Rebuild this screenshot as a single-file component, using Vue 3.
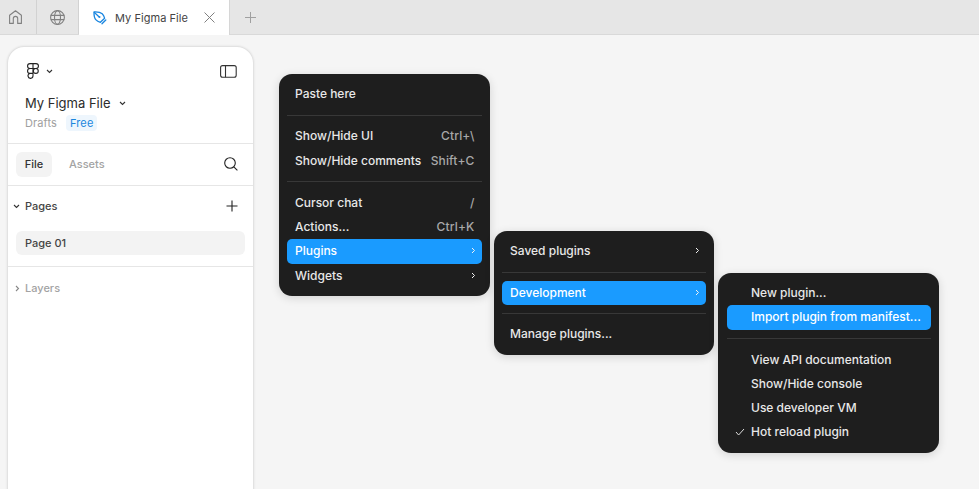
<script setup>
const menu1 = [
  { label: 'Paste here' },
  { sep: true },
  { label: 'Show/Hide UI', hint: 'Ctrl+\\' },
  { label: 'Show/Hide comments', hint: 'Shift+C' },
  { sep: true },
  { label: 'Cursor chat', hint: '/' },
  { label: 'Actions...', hint: 'Ctrl+K' },
  { label: 'Plugins', arrow: true, active: true },
  { label: 'Widgets', arrow: true },
]
const menu2 = [
  { label: 'Saved plugins', arrow: true },
  { sep: true },
  { label: 'Development', arrow: true, active: true },
  { sep: true },
  { label: 'Manage plugins...' },
]
const menu3 = [
  { label: 'New plugin...' },
  { label: 'Import plugin from manifest...', active: true },
  { sep: true },
  { label: 'View API documentation' },
  { label: 'Show/Hide console' },
  { label: 'Use developer VM' },
  { label: 'Hot reload plugin', check: true },
]
const menus = [
  { cls: 'm1', items: menu1 },
  { cls: 'm2', items: menu2 },
  { cls: 'm3', items: menu3 },
]
</script>

<template>
  <div class="app">
    <header class="tabbar">
      <div class="tab icon-tab home">
        <svg width="13" height="14" viewBox="0 0 13 14" fill="none" stroke="#808080" stroke-width="1.1"><path d="M.6 13.4V5.2L6.5.7l5.9 4.5v8.2H8.7V8.6a2.2 2.2 0 0 0-4.4 0v4.8z" stroke-linejoin="round"/></svg>
      </div>
      <div class="tab icon-tab globe">
        <svg width="15" height="15" viewBox="0 0 15 15" fill="none" stroke="#808080" stroke-width="1.1"><circle cx="7.5" cy="7.5" r="6.9"/><ellipse cx="7.5" cy="7.5" rx="3" ry="6.9"/><path d="M.8 5.4h13.4M.8 9.6h13.4"/></svg>
      </div>
      <div class="tab active-tab">
        <svg class="draft" width="14" height="14" viewBox="0 0 14 14" fill="none" stroke="#1a86e0" stroke-width="1.3"><path d="M1 1c3.600-.2 6.600.4 8.200 1.800 1.100 1 1.900 2.600 2.400 4.400L7.400 11.300C5.700 10.800 4 10 3 8.900 1.500 7.300.9 4.500 1 1z" stroke-linejoin="round"/><circle cx="6.400" cy="6" r="1.100" fill="#1a86e0" stroke="none"/><path d="M1.400 1.400 5.700 5.400M9 12.800l3.800-3.800" stroke-linecap="round"/></svg>
        <span class="tab-title">My Figma File</span>
        <svg class="close" width="11" height="11" viewBox="0 0 11 11" fill="none" stroke="#808080" stroke-width="1"><path d="M.5.5l10 10M10.500.5l-10 10"/></svg>
      </div>
      <div class="add-tab">
        <svg width="11" height="11" viewBox="0 0 11 11" fill="none" stroke="#a0a0a0" stroke-width="1"><path d="M5.500 0v11M0 5.500h11"/></svg>
      </div>
    </header>

    <main class="canvas">
      <aside class="panel">
        <section class="head">
          <div class="head-top">
            <div class="logo-wrap">
              <svg width="12" height="16" viewBox="0 0 12 16" fill="none" stroke="#222" stroke-width="1.1"><path d="M6 .6H3A2.450 2.450 0 0 0 3 5.500h3zM6 5.500H3a2.450 2.450 0 0 0 0 4.900h3zM6 10.400H3a2.500 2.500 0 1 0 3 2.450zM6 .6h3a2.450 2.450 0 0 1 0 4.900H6z"/><circle cx="8.800" cy="7.950" r="2.450"/></svg>
              <svg class="chev" width="7" height="5" viewBox="0 0 7 5" fill="none" stroke="#333" stroke-width="1.1"><path d="m1 1 2.500 2.500L6 1"/></svg>
            </div>
            <svg class="layout-icon" width="17" height="13" viewBox="0 0 17 13" fill="none" stroke="#333" stroke-width="1.1"><rect x=".6" y=".6" width="15.600" height="11.600" rx="2"/><path d="M5.500.6v11.600"/></svg>
          </div>
          <div class="file-name">
            <span>My Figma File</span>
            <svg class="chev" width="7" height="5" viewBox="0 0 7 5" fill="none" stroke="#333" stroke-width="1.1"><path d="m1 1 2.500 2.500L6 1"/></svg>
          </div>
          <div class="file-meta">
            <span class="drafts">Drafts</span>
            <span class="badge">Free</span>
          </div>
        </section>

        <section class="tabs">
          <span class="pill">File</span>
          <span class="assets">Assets</span>
          <svg class="search" width="14" height="14" viewBox="0 0 14 14" fill="none" stroke="#222" stroke-width="1.1"><circle cx="6" cy="6" r="5.300"/><path d="m9.800 9.800 3.600 3.600"/></svg>
        </section>

        <section class="pages">
          <div class="pages-head">
            <svg class="caret" width="7" height="5" viewBox="0 0 7 5" fill="none" stroke="#333" stroke-width="1.1"><path d="m1 1 2.500 2.500L6 1"/></svg>
            <span class="pages-label">Pages</span>
            <svg class="plus" width="12" height="12" viewBox="0 0 12 12" fill="none" stroke="#222" stroke-width="1.1"><path d="M6 .5v11M.5 6h11"/></svg>
          </div>
          <div class="page-row">Page 01</div>
        </section>

        <section class="layers">
          <svg class="caret" width="5" height="7" viewBox="0 0 5 7" fill="none" stroke="#888" stroke-width="1.1"><path d="m1 1 2.500 2.500L1 6"/></svg>
          <span>Layers</span>
        </section>
      </aside>

      <div v-for="m in menus" :key="m.cls" class="menu" :class="m.cls">
        <template v-for="(it, i) in m.items" :key="i">
          <div v-if="it.sep" class="sep"></div>
          <div v-else class="item" :class="{ active: it.active }">
            <svg v-if="it.check" class="check" width="10" height="8" viewBox="0 0 10 8" fill="none" stroke="#ddd" stroke-width="1"><path d="m1 4 2.600 3L9 1"/></svg>
            <span class="label">{{ it.label }}</span>
            <span v-if="it.hint" class="hint">{{ it.hint }}</span>
            <svg v-if="it.arrow" class="arrow" width="5" height="7" viewBox="0 0 5 7" fill="none" stroke="#f2f2f2" stroke-width="1"><path d="m1 1 2.500 2.500L1 6"/></svg>
          </div>
        </template>
      </div>
    </main>
  </div>
</template>

<style>
html, body { margin: 0; background: #f5f5f5; overflow: hidden; }
</style>

<style scoped>
.app {
  width: 979px;
  height: 489px;
  display: flex;
  flex-direction: column;
  overflow: hidden;
  font-family: Inter, "Noto Sans", sans-serif;
  font-size: 12px;
  color: #333;
  background: #f5f5f5;
}
.tabbar {
  height: 34px;
  flex: none;
  display: flex;
  background: #e6e6e6;
  border-bottom: 1px solid #d9d9d9;
}
.tab {
  display: flex;
  align-items: center;
  box-sizing: border-box;
}
.icon-tab {
  justify-content: center;
  border-right: 1px solid #d2d2d2;
}
.home { width: 37px; padding-right: 6px; }
.globe { width: 42px; }
.active-tab {
  width: 151px;
  height: 35px;
  background: #fff;
  padding-left: 14px;
  border-right: 1px solid #d6d6d6;
}
.tab-title {
  margin-left: 8px;
  font-size: 11px;
  color: #444;
  letter-spacing: 0.05px;
}
.close { margin-left: 16px; }
.add-tab {
  width: 40px;
  display: flex;
  align-items: center;
  justify-content: center;
}
.canvas {
  flex: 1;
  position: relative;
  padding: 12px 0 0 8px;
  min-height: 0;
}
.panel {
  width: 245px;
  height: 460px;
  background: #fff;
  border-radius: 16px 16px 0 0;
  box-shadow: 0 0 3px rgba(0, 0, 0, 0.22);
  display: flex;
  flex-direction: column;
}
.head {
  height: 97px;
  flex: none;
  box-sizing: border-box;
  padding: 15px 16px 0 19px;
  border-bottom: 1px solid #e6e6e6;
}
.head-top {
  display: flex;
  align-items: center;
  justify-content: space-between;
  height: 17px;
}
.logo-wrap {
  display: flex;
  align-items: center;
  gap: 7px;
}
.logo-wrap .chev { margin-top: 2px; }
.layout-icon { margin-top: 2px; }
.file-name {
  margin: 15px 0 0 -2px;
  display: flex;
  align-items: center;
  gap: 9px;
  font-size: 13px;
  color: #2c2c2c;
  line-height: 18px;
}
.file-meta {
  margin: 3px 0 0 -2px;
  display: flex;
  align-items: center;
  gap: 9px;
  font-size: 11px;
  line-height: 16px;
  letter-spacing: 0.12px;
}
.drafts { color: #a0a0a0; }
.badge {
  color: #1b86dd;
  background: #eef6fd;
  border-radius: 4px;
  padding: 0 4px;
}
.tabs {
  height: 42px;
  flex: none;
  box-sizing: border-box;
  display: flex;
  align-items: center;
  padding: 0 15px 0 8px;
  border-bottom: 1px solid #e6e6e6;
  font-size: 11px;
  font-weight: 500;
}
.pill {
  background: #f3f3f3;
  border-radius: 6px;
  width: 36px;
  height: 25px;
  line-height: 24px;
  text-align: center;
  color: #333;
}
.assets {
  margin: 0 0 2px 17px;
  color: #a3a3a3;
  flex: 1;
}
.search { margin-bottom: 2px; }
.pages {
  height: 81px;
  flex: none;
  box-sizing: border-box;
  border-bottom: 1px solid #e6e6e6;
  padding: 0 8px;
}
.pages-head {
  height: 40px;
  margin: 0 0 5px -3px;
  display: flex;
  align-items: center;
  font-size: 11px;
  font-weight: 500;
}
.pages-label {
  margin-left: 5px;
  flex: 1;
  color: #444;
}
.plus { margin-right: 7px; }
.page-row {
  height: 24px;
  line-height: 24px;
  background: #f3f3f3;
  border-radius: 6px;
  padding-left: 9px;
  font-size: 11px;
  font-weight: 500;
  color: #444;
}
.layers {
  height: 42px;
  display: flex;
  align-items: center;
  padding-left: 7px;
  gap: 5px;
  font-size: 11px;
  font-weight: 500;
  color: #a3a3a3;
}
.menu {
  position: absolute;
  box-sizing: border-box;
  background: #1e1e1e;
  border-radius: 13px;
  padding: 8px;
  box-shadow: 0 2px 10px rgba(0, 0, 0, 0.14);
  color: #e8e8e8;
  font-size: 12px;
  font-weight: 500;
}
.m1 { left: 279px; top: 39px; width: 211px; height: 222px; }
.m2 { left: 494px; top: 196px; width: 220px; height: 124px; }
.m3 { left: 718px; top: 238px; width: 221px; height: 180px; padding-left: 9px; }
.item {
  position: relative;
  box-sizing: border-box;
  height: 24.25px;
  display: flex;
  align-items: center;
  padding: 0 8px 1px;
  border-radius: 5px;
}
.m2 .item { height: 24px; }
.item.active {
  background: #1a9bff;
  color: #fff;
}
.m3 .item { padding-left: 24px; }
.label { flex: 1; white-space: nowrap; }
.hint { color: #a8a8a8; letter-spacing: 0.15px; margin-right: -0.5px; }
.arrow { margin-right: -2px; }
.check { position: absolute; left: 8px; top: 8px; }
.sep {
  height: 1px;
  background: #383838;
  margin: 8.5px 0;
}
.m2 .sep:nth-child(4) { margin: 8px 0; }
</style>
